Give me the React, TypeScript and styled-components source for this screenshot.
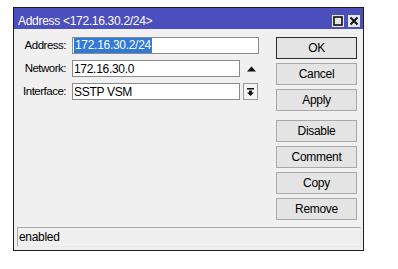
import styled, { createGlobalStyle } from "styled-components";

const Global = createGlobalStyle`
  html, body {
    margin: 0;
    padding: 0;
    background: #ffffff;
  }
  body {
    font-family: "Liberation Sans", Arial, sans-serif;
    font-size: 11.5px;
    letter-spacing: -0.3px;
    color: #000;
  }
`;

const Page = styled.div`
  padding: 7px 0 0 13px;
`;

const Window = styled.div`
  width: 351px;
  height: 244px;
  box-sizing: border-box;
  border: 1px solid #1e1e1e;
  background: #f0f0f0;
  display: flex;
  flex-direction: column;
`;

const TitleBar = styled.div`
  height: 21px;
  background: #4b4fbe;
  display: flex;
  align-items: center;
  justify-content: space-between;
  padding: 0 3px 0 4px;
  color: #fff;
  font-size: 12px;
`;

const TitleText = styled.span`
  padding-top: 4px;
`;

const TitleButtons = styled.div`
  display: flex;
  gap: 4px;
  padding-top: 4px;
`;

const TitleButton = styled.div`
  width: 12px;
  height: 12px;
  background: #e6e6e6;
  display: flex;
  align-items: center;
  justify-content: center;
`;

const Body = styled.div`
  flex: 1;
  display: flex;
  justify-content: space-between;
  padding: 8px 6px 0 0;
`;

const Form = styled.div`
  display: grid;
  grid-template-columns: 52px 187px;
  column-gap: 6px;
  row-gap: 6px;
  align-content: start;
`;

const Label = styled.div`
  text-align: right;
  line-height: 17px;
  letter-spacing: -0.5px;
`;

const FieldRow = styled.div`
  display: flex;
  align-items: center;
  height: 17px;
`;

const Input = styled.div<{ $w: number }>`
  width: ${(p) => p.$w}px;
  height: 17px;
  box-sizing: border-box;
  border: 1px solid #8a8a8a;
  background: #fff;
  padding: 0 1px;
  display: flex;
  align-items: center;
  font-size: 12px;
  white-space: nowrap;
`;

const Selected = styled.span`
  background: #3079d8;
  color: #fff;
  padding: 0 1px;
  line-height: 15px;
`;

const SideIcon = styled.div`
  width: 15px;
  height: 17px;
  margin-left: 4px;
  display: flex;
  align-items: center;
  justify-content: center;
`;

const DropButton = styled.div`
  width: 15px;
  height: 17px;
  box-sizing: border-box;
  margin-left: 3px;
  border: 1px solid #9a9a9a;
  background: #f4f4f4;
  display: flex;
  align-items: center;
  justify-content: center;
`;

const Buttons = styled.div`
  display: flex;
  flex-direction: column;
  gap: 4px;
  width: 81px;
`;

const Button = styled.div<{ $default?: boolean; $gapTop?: boolean }>`
  height: 22px;
  box-sizing: border-box;
  border: 1px solid ${(p) => (p.$default ? "#2b2b2b" : "#a9a9a9")};
  background: #e4e4e4;
  display: flex;
  align-items: center;
  justify-content: center;
  font-size: 12px;
  margin-top: ${(p) => (p.$gapTop ? "5px" : "0")};
`;

const StatusBar = styled.div`
  margin: 0 2px 3px 3px;
  height: 20px;
  box-sizing: border-box;
  border: 1px solid #a8a8a8;
  border-right-color: #e8e8e8;
  border-bottom-color: #e8e8e8;
  display: flex;
  align-items: center;
  padding-left: 1px;
  font-size: 12px;
`;

function App() {
  return (
    <Page>
      <Global />
      <Window>
        <TitleBar>
          <TitleText>Address &lt;172.16.30.2/24&gt;</TitleText>
          <TitleButtons>
            <TitleButton>
              <svg width="10" height="10" viewBox="0 0 10 10">
                <rect x="1" y="1" width="8" height="8" fill="none" stroke="#111" strokeWidth="1.6" />
              </svg>
            </TitleButton>
            <TitleButton>
              <svg width="10" height="10" viewBox="0 0 10 10">
                <path d="M1.5 1.5 L8.5 8.5 M8.5 1.5 L1.5 8.5" stroke="#111" strokeWidth="2" />
              </svg>
            </TitleButton>
          </TitleButtons>
        </TitleBar>
        <Body>
          <Form>
            <Label>Address:</Label>
            <FieldRow>
              <Input $w={187}>
                <Selected>172.16.30.2/24</Selected>
              </Input>
            </FieldRow>
            <Label>Network:</Label>
            <FieldRow>
              <Input $w={168}>172.16.30.0</Input>
              <SideIcon>
                <svg width="9" height="6" viewBox="0 0 9 6">
                  <path d="M0 5.5 L4.5 0.5 L9 5.5 Z" fill="#111" />
                </svg>
              </SideIcon>
            </FieldRow>
            <Label>Interface:</Label>
            <FieldRow>
              <Input $w={168}>SSTP VSM</Input>
              <DropButton>
                <svg width="7" height="8" viewBox="0 0 7 8">
                  <rect x="0" y="0" width="7" height="1.5" fill="#111" />
                  <path d="M2 2.5 H5 V4.5 H7 L3.5 8 L0 4.5 H2 Z" fill="#111" />
                </svg>
              </DropButton>
            </FieldRow>
          </Form>
          <Buttons>
            <Button $default>OK</Button>
            <Button>Cancel</Button>
            <Button>Apply</Button>
            <Button $gapTop>Disable</Button>
            <Button>Comment</Button>
            <Button>Copy</Button>
            <Button>Remove</Button>
          </Buttons>
        </Body>
        <StatusBar>enabled</StatusBar>
      </Window>
    </Page>
  );
}

export default App;
